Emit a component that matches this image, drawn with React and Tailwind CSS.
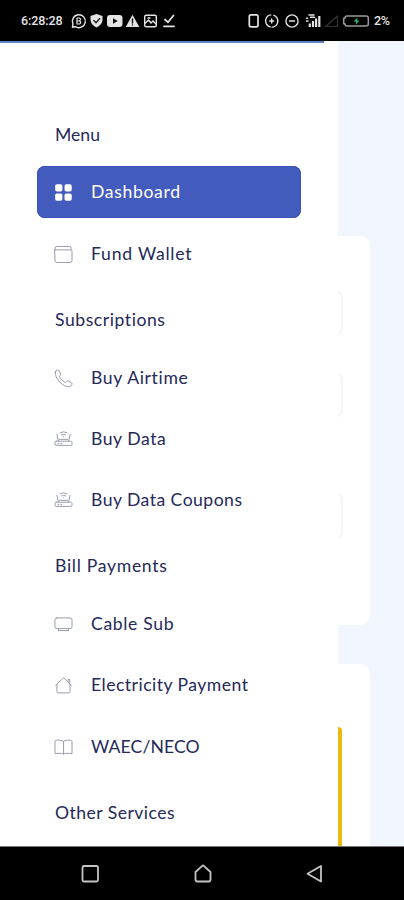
import React from "react";

const stroke = {
  fill: "none",
  stroke: "currentColor",
  strokeWidth: 1,
  strokeLinecap: "round",
  strokeLinejoin: "round",
};

function Icon({ name }) {
  const shapes = {
    grid: (
      <g fill="currentColor" stroke="none">
        <rect x="1.2" y="1.2" width="7.4" height="7.4" rx="1.8" />
        <rect x="10.8" y="1.2" width="7.4" height="7.4" rx="1.8" />
        <rect x="1.2" y="10.8" width="7.4" height="7.4" rx="1.8" />
        <rect x="10.8" y="10.8" width="7.4" height="7.4" rx="1.8" />
      </g>
    ),
    wallet: (
      <path d="M1 5.5V3.5Q1 1.5 3 1.5H16Q17.5 1.5 17.5 3V5M1 5H17Q18.5 5 18.5 6.5V16Q18.5 18 16.5 18H3Q1 18 1 16Z" />
    ),
    phone: (
      <path d="M1.3 3.2Q1.6 1 3.7 1Q4.8 .9 5.2 2L6.7 5Q7.1 6.2 6.2 6.9L5.4 7.9Q7.6 11.9 11.6 13.9L12.7 12.8Q13.6 11.9 14.8 12.5L17.5 13.8Q18.8 14.5 18.3 16.1Q17.6 18.5 15 18.3Q10.4 18 6.3 13.9Q.7 8 1.3 3.2Z" />
    ),
    router: (
      <g>
        <rect x="1" y="11.5" width="17.5" height="4.3" rx="1.3" />
        <path d="M4.5 11.2L3 4.5M15 11.2L16.5 4.5M6.3 2.8Q9.8 .8 13.3 2.8M7.7 5Q9.8 3.6 11.9 5M9.8 6.9V7M5.5 9.6H14M4 14H5M7 14H8" />
      </g>
    ),
    tv: (
      <path d="M3 3H16.5Q18.5 3 18.5 5V12Q18.5 14 16.5 14H3Q1 14 1 12V5Q1 3 3 3ZM4.5 16H15M4.5 14L5 16M15 14L14.5 16" />
    ),
    house: (
      <path d="M1.8 9.8L9 2.4Q9.8 1.6 10.6 2.4L17.7 9.8M14.4 6V3.5H16.2V8M3 8.6V16Q3 17.3 4.3 17.3H15.2Q16.5 17.3 16.5 16V8.6" />
    ),
    book: (
      <path d="M9.8 3.5Q8.5 2.2 6 2.2H2.5Q1 2.2 1 3.7V15.8H8Q9.4 15.8 9.8 16.5Q10.2 15.8 11.6 15.8H18.5V3.7Q18.5 2.2 17 2.2H13.5Q11 2.2 9.8 3.5V16.5" />
    ),
  };
  return (
    <svg className="h-[19px] w-[19px] shrink-0" viewBox="0 0 19.5 19.5" {...stroke}>
      {shapes[name]}
    </svg>
  );
}

const groups = [
  {
    title: "Menu",
    track: "tracking-[0px]",
    items: [
      { label: "Dashboard", icon: "grid", active: true, track: "tracking-[0.65px]" },
      { label: "Fund Wallet", icon: "wallet", track: "tracking-[0.77px]" },
    ],
  },
  {
    title: "Subscriptions",
    track: "tracking-[0.55px]",
    items: [
      { label: "Buy Airtime", icon: "phone", track: "tracking-[0.65px]" },
      { label: "Buy Data", icon: "router", track: "tracking-[0.55px]" },
      { label: "Buy Data Coupons", icon: "router", track: "tracking-[0.46px]" },
    ],
  },
  {
    title: "Bill Payments",
    track: "tracking-[0.7px]",
    items: [
      { label: "Cable Sub", icon: "tv", track: "tracking-[0.65px]" },
      { label: "Electricity Payment", icon: "house", track: "tracking-[0.47px]" },
      { label: "WAEC/NECO", icon: "book", track: "tracking-[0.1px]" },
    ],
  },
  { title: "Other Services", track: "tracking-[0.46px]", items: [] },
];

function StatusBar() {
  return (
    <header className="flex h-[41px] shrink-0 items-center bg-black pl-[21px] pr-[13px] text-[#e4e4e4]">
      <span className="w-[43px] whitespace-nowrap pt-px font-['Roboto',sans-serif] text-[12.5px] font-medium leading-4 tracking-[-0.1px]">
        6:28:28
      </span>
      <svg className="ml-[6px] h-[18px] w-[106px]" viewBox="70 12 106 18" {...stroke} strokeWidth="1.4">
        <path d="M72.4 27.2L73 24A6.5 6.5 0 1 1 75.4 26.7Z" />
        <path d="M77 18H79.5Q81.7 19.3 79.4 20.7Q82 22.5 79.5 24H77ZM77 21H79" strokeWidth="1.2" />
        <path d="M96.5 14L102.5 16V20Q102.2 25 96.5 27.5Q90.8 25 90.5 20V16Z" fill="currentColor" stroke="none" />
        <path d="M93.8 20.5L96 22.7L99.7 18.5" stroke="#222" />
        <rect x="107" y="15" width="15.5" height="12" rx="3" fill="currentColor" stroke="none" />
        <path d="M113 18.2L117.7 21L113 23.8Z" fill="#111" stroke="none" />
        <path d="M132.5 14.7L139.3 27H125.7Z" fill="currentColor" stroke="none" />
        <path d="M132.5 19V23M132.5 25V25.1" stroke="#111" />
        <rect x="144.7" y="15.2" width="11.6" height="11.6" rx="1.5" />
        <path d="M145.5 23L148.5 20L151 23L153 21L156 24M148 18H150" />
        <path d="M165 19.5L168 22.3L173.5 15.5M164 26.3H174" strokeWidth="1.8" />
      </svg>
      <svg className="ml-auto h-[18px] w-[124px]" viewBox="246 12 124 18" {...stroke} strokeWidth="1.4">
        <rect x="249.3" y="14.8" width="8.7" height="12" rx="1.8" strokeWidth="1.7" />
        <circle cx="271.7" cy="21" r="6.1" strokeDasharray="17.2 2" strokeLinecap="butt" transform="rotate(100 271.7 21)" />
        <path d="M269.7 21H273.7M271.7 19V23" />
        <circle cx="292" cy="21" r="6.1" />
        <path d="M289.5 21H294.5" />
        <path d="M309.8 23.5V27M313 21V27M316.1 18.5V27M319.3 16V27" strokeWidth="2.2" strokeLinecap="butt" />
        <path d="M306.5 18.3H307.5M306.5 21H308M309 15H314M310.5 17.2H314.5" strokeWidth="1.5" />
        <path d="M337.5 16V26.5H325.5Z" stroke="#353535" strokeWidth="1.2" />
        <path d="M347 16H366Q368.3 16 368.3 18V24Q368.3 26 366 26H347Q345 26 345 23.7H343.7V18.3H345Q345 16 347 16Z" stroke="#999" strokeWidth="1.5" />
        <path d="M357.5 17.5L353.6 21.6H356L355.7 24.7L359.4 20.4H357Z" fill="#30b77c" stroke="none" />
      </svg>
      <span className="ml-[4px] w-[17px] whitespace-nowrap pt-px font-['Roboto',sans-serif] text-[12.5px] font-medium leading-4 tracking-[-0.4px]">
        2%
      </span>
    </header>
  );
}

function PageBehind() {
  return (
    <div className="flex h-full flex-col bg-[#f1f5fe] pr-[34px] pt-[195px]">
      <section className="h-[389px] shrink-0 rounded-[10px] bg-white pr-[27px] pt-[54px]">
        <div className="h-[46px] rounded-[8px] border-2 border-[#f5f5f6]" />
        <div className="mt-[36px] h-[46px] rounded-[8px] border-2 border-[#f5f5f6]" />
        <div className="mt-[74px] h-[48px] rounded-[8px] border-2 border-[#f5f5f6]" />
      </section>
      <section className="mt-[39px] flex-1 rounded-t-[10px] bg-white pr-[28px] pt-[63px]">
        <div className="h-full rounded-tr-[4px] border-r-4 border-[#edb90d]" />
      </section>
    </div>
  );
}

function Drawer() {
  return (
    <nav className="absolute inset-y-0 left-0 w-[338px] overflow-hidden bg-white pl-[37px] pr-[37px] pt-[58px] text-[#252957]">
      {groups.map((group) => (
        <div key={group.title}>
          <h2 className={`h-[62.7px] whitespace-nowrap pl-[18px] pt-[23.6px] text-[17.6px] font-normal leading-6 ${group.track}`}>
            {group.title}
          </h2>
          {group.items.map((item) => (
            <div key={item.label} className="flex h-[61.3px] items-center">
              <a
                className={`flex h-[52px] w-full items-center gap-[18px] rounded-[8px] pl-[17px] ${
                  item.active ? "bg-[#435bbd] text-white ring-1 ring-inset ring-[#3a53b5]" : ""
                }`}
              >
                <span className={item.active ? "pt-px text-white" : "pt-px text-[#9699ab]"}>
                  <Icon name={item.icon} />
                </span>
                <span className={`whitespace-nowrap text-[17.6px] leading-6 ${item.track}`}>
                  {item.label}
                </span>
              </a>
            </div>
          ))}
        </div>
      ))}
    </nav>
  );
}

function NavigationBar() {
  return (
    <footer className="flex h-[54px] shrink-0 items-center justify-between border-t border-[#777] bg-black pl-[80px] pr-[79px] text-[#c4c4c4]">
      <svg className="h-5 w-5" viewBox="0 0 20 20" {...stroke} strokeWidth="1.8">
        <rect x="2.5" y="2" width="15.5" height="15.5" rx="1.5" />
      </svg>
      <svg className="h-5 w-5" viewBox="0 0 20 20" {...stroke} strokeWidth="1.8">
        <path d="M9.2 1.8Q10 1.2 10.8 1.8L17.5 8V15.5Q17.5 17.5 15.5 17.5H4.5Q2.5 17.5 2.5 15.5V8Z" />
      </svg>
      <svg className="h-5 w-5" viewBox="0 0 20 20" {...stroke} strokeWidth="1.8">
        <path d="M16 2V17.5L2.5 9.8Z" />
      </svg>
    </footer>
  );
}

export default function App() {
  return (
    <div className="flex h-[900px] w-[404px] flex-col overflow-hidden font-['Lato',sans-serif]">
      <StatusBar />
      <main className="relative min-h-0 flex-1 overflow-hidden">
        <PageBehind />
        <Drawer />
        <div className="absolute left-0 top-0 h-[2px] w-[324px] bg-[#5c82c9]" />
      </main>
      <NavigationBar />
    </div>
  );
}
